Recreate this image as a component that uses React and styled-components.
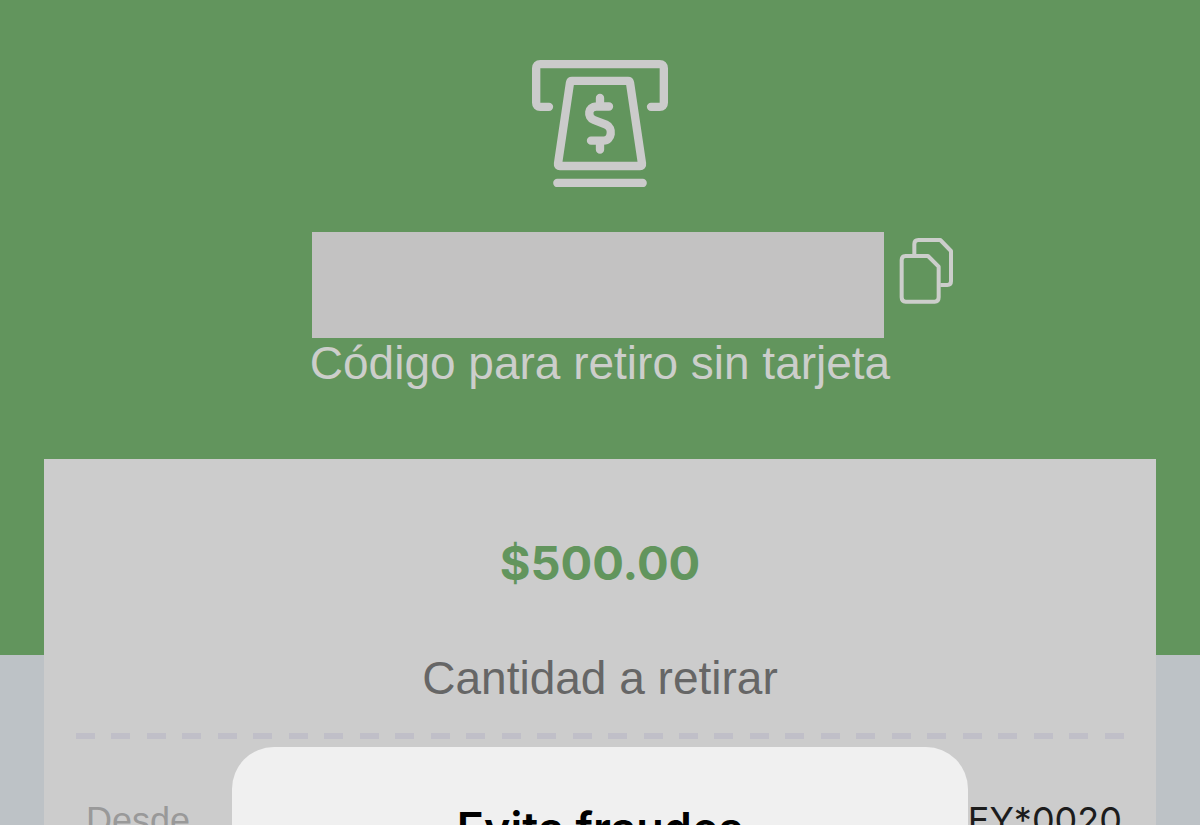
import React from 'react';
import styled, { createGlobalStyle, ThemeProvider } from 'styled-components';

const theme = {
	green: '#62955d',
	page: '#bdc2c6',
	card: '#cccccc',
	light: '#cccecb',
	mask: '#c3c2c2',
	dash: '#c0bfc8',
	dialog: '#f0f0f0',
	textFont: '"Liberation Sans", Arial, sans-serif',
	numberFont: 'Inter, "Liberation Sans", sans-serif',
};

const GlobalStyle = createGlobalStyle`
	* {
		box-sizing: border-box;
	}

	body {
		margin: 0;
		overflow: hidden;
		background: ${({ theme }) => theme.page};
		font-family: ${({ theme }) => theme.textFont};
	}
`;

const Screen = styled.main`
	position: relative;
	height: 100vh;
	overflow: hidden;
`;

const Header = styled.header`
	display: flex;
	flex-direction: column;
	align-items: center;
	padding: 60px 0 266px;
	background: ${({ theme }) => theme.green};
	color: ${({ theme }) => theme.light};
`;

const CashIcon = styled.svg`
	display: block;
	width: 136px;
	height: 127px;
	margin-bottom: 45px;
`;

const CodeRow = styled.div`
	display: grid;
	grid-template-columns: 1fr auto 1fr;
	column-gap: 15px;
	width: 100%;
	padding-right: 4px;
`;

const CodeMask = styled.div`
	grid-column: 2;
	width: 572px;
	height: 106px;
	background: ${({ theme }) => theme.mask};
`;

const CopyButton = styled.button`
	justify-self: start;
	align-self: start;
	margin-top: 6px;
	padding: 0;
	border: 0;
	background: none;
	color: inherit;
	cursor: pointer;

	svg {
		display: block;
		width: 55px;
		height: 68px;
	}
`;

const Caption = styled.p`
	margin: 0;
	color: ${({ $muted, theme }) => ($muted ? '#666' : theme.light)};
	font-size: 46px;
	line-height: 51px;
	text-align: center;
	white-space: nowrap;
`;

const Card = styled.section`
	position: relative;
	height: 480px;
	margin: -196px 44px 0;
	padding: 76px 32px 0;
	background: ${({ theme }) => theme.card};
`;

const Amount = styled.h1`
	margin: 0 0 62px;
	color: ${({ theme }) => theme.green};
	font-family: ${({ theme }) => theme.numberFont};
	font-size: 47px;
	font-weight: 700;
	line-height: 56px;
	text-align: center;
`;

const Divider = styled.div`
	display: flex;
	justify-content: space-between;
	margin: 29px 0 61px;
`;

const Dash = styled.span`
	width: 19px;
	height: 6px;
	background: ${({ theme }) => theme.dash};
`;

const Details = styled.dl`
	display: flex;
	align-items: baseline;
	justify-content: space-between;
	margin: 0;
	padding: 0 2px 0 10px;
	font-size: 36px;
	line-height: 40px;

	dt {
		color: #999;
	}

	dd {
		margin: 0;
		color: #1c1c1c;
		font-family: ${({ theme }) => theme.numberFont};
	}
`;

const Dialog = styled.div`
	position: absolute;
	top: 747px;
	left: 50%;
	width: 736px;
	height: 400px;
	padding-top: 54px;
	border-radius: 42px;
	background: ${({ theme }) => theme.dialog};
	transform: translateX(-50%);

	h2 {
		margin: 0;
		color: #000;
		font-family: ${({ theme }) => theme.numberFont};
		font-size: 45px;
		font-weight: 600;
		line-height: 56px;
		text-align: center;
	}
`;

const dashes = Array.from({ length: 30 }, (_, i) => i);

function App() {
	return (
		<ThemeProvider theme={theme}>
			<GlobalStyle />
			<Screen>
				<Header>
					<CashIcon viewBox="66 60 408 381" fill="none" stroke="#cbcbcb" strokeWidth="25" strokeLinecap="round" strokeLinejoin="round" aria-hidden="true">
						<path d="M117 200.500H91Q78.500 200.500 78.500 188V85Q78.500 72.500 91 72.500H449Q461.500 72.500 461.500 85V188Q461.500 200.500 449 200.500H423" />
						<path d="M186 122.500H354Q359 122.500 360 128L396 371Q397 378 390 378H150Q143 378 144 371L180 128Q181 122.500 186 122.500Z" />
						<path d="M297 199.500H259C234 199.500 230 231 252 240L288 254C311 264 305 302 281 302H243M270 174V198M270 303V329" />
						<path d="M142 429H398" />
					</CashIcon>

					<CodeRow>
						<CodeMask />
						<CopyButton type="button" aria-label="Copiar">
							<svg viewBox="87 54 165 204" fill="none" stroke="currentColor" strokeWidth="12" strokeLinejoin="round">
								<path d="M107 108H174L206 140V232Q206 245 194 245H107Q95 245 95 232V120Q95 108 107 108Z" />
								<path d="M133 104V72Q133 60 145 60H211L243 93V184Q243 195 232 195H211" />
							</svg>
						</CopyButton>
					</CodeRow>
					<Caption>Código para retiro sin tarjeta</Caption>
				</Header>

				<Card>
					<Amount>$500.00</Amount>
					<Caption $muted>Cantidad a retirar</Caption>
					<Divider>
						{dashes.map(i => <Dash key={i} />)}
					</Divider>
					<Details>
						<dt>Desde</dt>
						<dd>EY*0020</dd>
					</Details>
				</Card>

				<Dialog role="dialog" aria-labelledby="dialog-title">
					<h2 id="dialog-title">Evita fraudes</h2>
				</Dialog>
			</Screen>
		</ThemeProvider>
	);
}

export default App;
